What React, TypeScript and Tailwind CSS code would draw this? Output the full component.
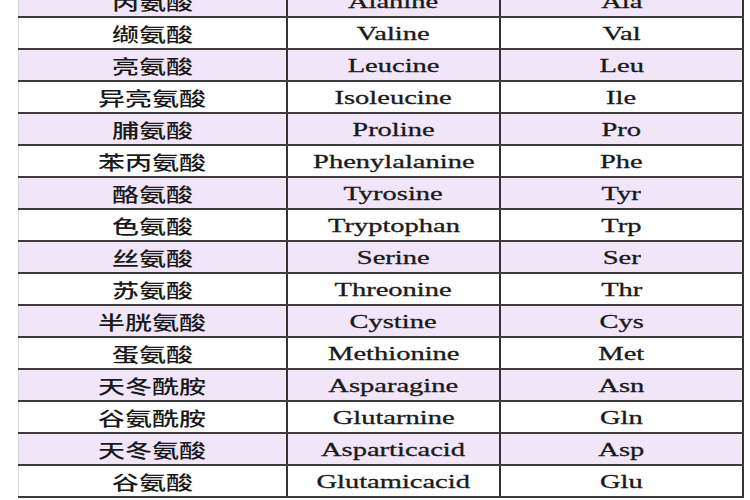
const rows = [
  ["丙氨酸", "Alanine", "Ala"],
  ["缬氨酸", "Valine", "Val"],
  ["亮氨酸", "Leucine", "Leu"],
  ["异亮氨酸", "Isoleucine", "Ile"],
  ["脯氨酸", "Proline", "Pro"],
  ["苯丙氨酸", "Phenylalanine", "Phe"],
  ["酪氨酸", "Tyrosine", "Tyr"],
  ["色氨酸", "Tryptophan", "Trp"],
  ["丝氨酸", "Serine", "Ser"],
  ["苏氨酸", "Threonine", "Thr"],
  ["半胱氨酸", "Cystine", "Cys"],
  ["蛋氨酸", "Methionine", "Met"],
  ["天冬酰胺", "Asparagine", "Asn"],
  ["谷氨酰胺", "Glutarnine", "Gln"],
  ["天冬氨酸", "Asparticacid", "Asp"],
  ["谷氨酸", "Glutamicacid", "Glu"],
];

const zh = { fontFamily: '"Noto Sans CJK SC", "Noto Sans", sans-serif' };
const en = { fontFamily: '"Liberation Serif", "Times New Roman", serif' };

export default function App() {
  return (
    <div className="w-[750px] h-[500px] overflow-hidden bg-white">
      <div className="ml-[18px] w-[726px] -mt-[16px] border-b-2 border-[#3c3c3c]">
        {rows.map(([cn, name, abbr], i) => (
          <div
            key={name}
            className={`grid grid-cols-[270px_213px_243px] h-[32px] border-t-2 border-[#3c3c3c] text-[#1a1a1a] ${
              i % 2 === 0 ? "bg-[#f1e6f8]" : "bg-white"
            }`}
          >
            <div className="flex items-center justify-center border-l border-[#d8d8d8] border-r-2 border-r-[#333]">
              <span className="inline-block text-[19px] leading-none font-medium scale-x-[1.42]" style={zh}>
                {cn}
              </span>
            </div>
            <div className="flex items-center justify-center border-r-2 border-[#333]">
              <span className="inline-block text-[19px] leading-none scale-x-[1.5] [-webkit-text-stroke:0.3px_#1a1a1a]" style={en}>
                {name}
              </span>
            </div>
            <div className="flex items-center justify-center border-r-2 border-[#333]">
              <span className="inline-block text-[19px] leading-none scale-x-[1.5] [-webkit-text-stroke:0.3px_#1a1a1a]" style={en}>
                {abbr}
              </span>
            </div>
          </div>
        ))}
      </div>
    </div>
  );
}
